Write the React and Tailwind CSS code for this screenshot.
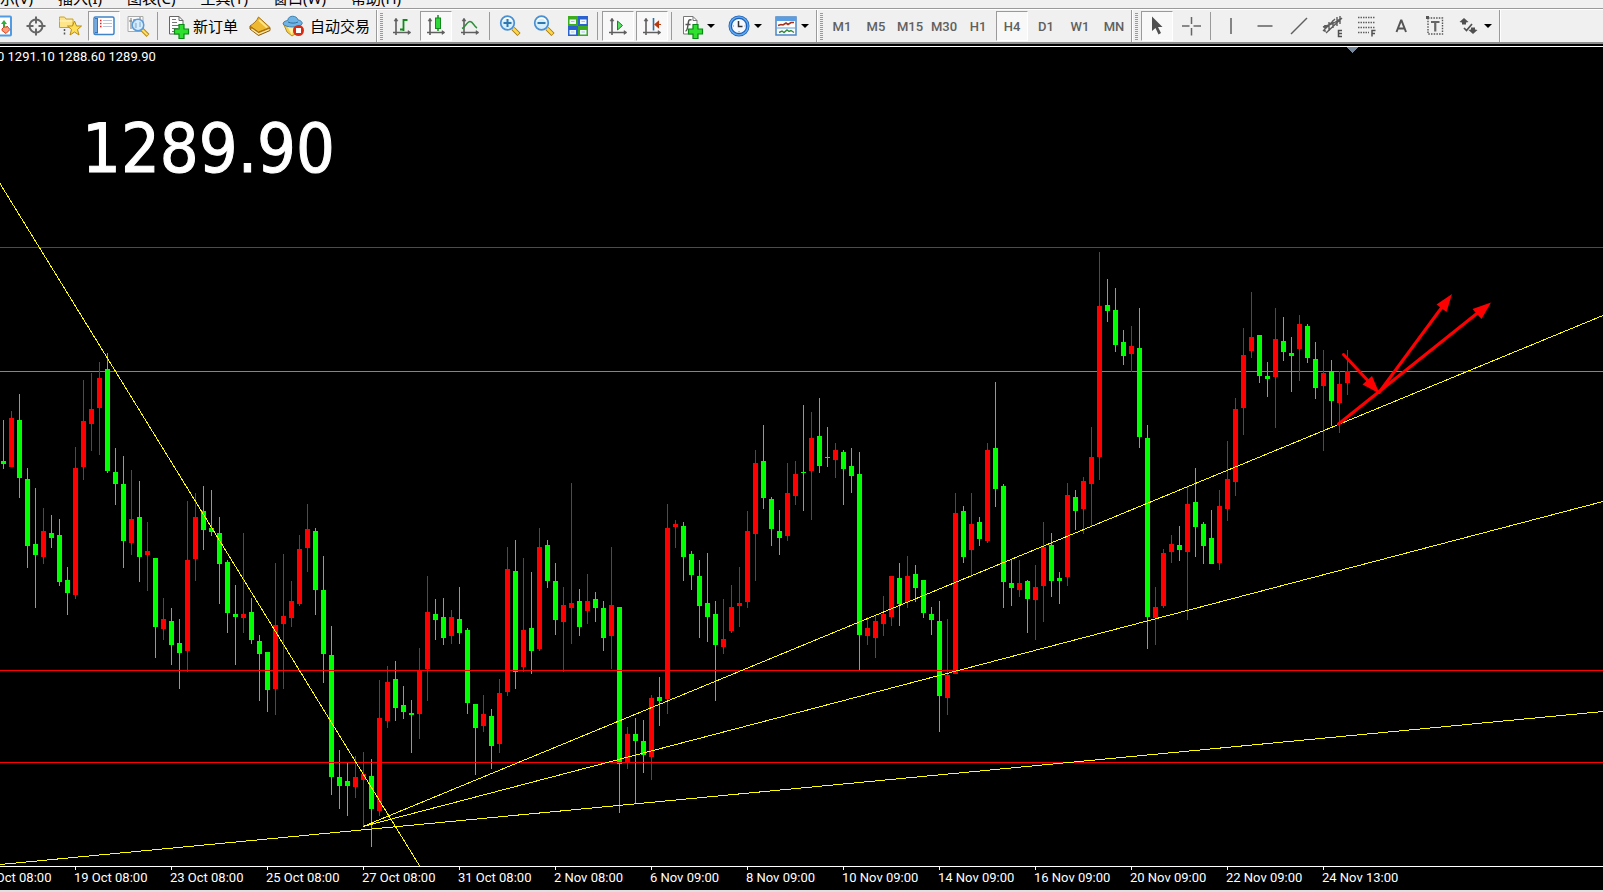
import { useState } from 'react';

// Chart coordinates are measured from the top of the window, the plot starts at this y
const PLOT_TOP = 47;
const BAR_STEP = 8;

// [direction, high, body top, body bottom, low]
const candles = [
  ['g', 420, 461, 464, 469], ['r', 411, 418, 467, 467], ['g', 394, 420, 478, 498], ['g', 468, 479, 546, 568],
  ['g', 488, 544, 555, 608], ['r', 508, 531, 557, 564], ['g', 515, 533, 538, 548], ['g', 519, 535, 582, 586],
  ['g', 567, 580, 593, 615], ['r', 447, 468, 595, 599], ['r', 380, 421, 467, 480], ['r', 373, 409, 424, 451],
  ['r', 362, 378, 408, 455], ['g', 353, 369, 471, 473], ['g', 448, 472, 484, 505], ['g', 456, 484, 541, 568],
  ['r', 470, 519, 543, 555], ['g', 481, 517, 557, 582], ['r', 522, 551, 555, 591], ['g', 558, 558, 627, 658],
  ['r', 598, 619, 629, 640], ['g', 608, 621, 645, 665], ['g', 619, 643, 653, 689], ['r', 501, 560, 651, 672],
  ['r', 493, 517, 559, 581], ['g', 486, 511, 530, 550], ['g', 490, 528, 532, 536], ['g', 517, 533, 564, 604],
  ['g', 560, 562, 613, 633], ['g', 585, 614, 617, 665], ['r', 533, 614, 618, 633], ['g', 598, 612, 640, 644],
  ['g', 635, 641, 654, 701], ['g', 652, 652, 690, 712], ['r', 563, 625, 689, 715], ['r', 554, 616, 624, 689],
  ['r', 581, 601, 618, 627], ['r', 535, 549, 604, 606], ['r', 504, 529, 548, 572], ['g', 528, 531, 590, 615],
  ['g', 556, 590, 654, 683], ['g', 626, 655, 777, 795], ['g', 750, 777, 786, 809], ['g', 763, 781, 786, 816],
  ['r', 756, 777, 787, 798], ['r', 752, 774, 780, 826], ['g', 759, 776, 809, 847], ['r', 680, 718, 811, 816],
  ['r', 666, 682, 721, 728], ['g', 661, 679, 708, 721], ['g', 686, 705, 712, 719], ['g', 700, 713, 715, 753],
  ['r', 648, 670, 714, 739], ['r', 576, 612, 669, 701], ['g', 599, 614, 620, 640], ['g', 598, 617, 638, 645],
  ['r', 610, 617, 636, 644], ['g', 587, 619, 633, 644], ['g', 628, 630, 703, 714], ['g', 704, 704, 728, 775],
  ['r', 695, 714, 726, 732], ['g', 709, 716, 746, 769], ['r', 679, 693, 744, 753], ['r', 547, 569, 692, 696],
  ['g', 540, 571, 672, 689], ['r', 558, 630, 667, 672], ['g', 572, 628, 651, 674], ['r', 528, 547, 649, 651],
  ['g', 540, 545, 581, 588], ['g', 563, 581, 620, 635], ['r', 587, 605, 622, 672], ['r', 483, 603, 608, 644],
  ['g', 589, 601, 627, 636], ['r', 574, 601, 611, 624], ['g', 592, 599, 608, 622], ['g', 601, 608, 638, 651],
  ['r', 547, 605, 636, 669], ['g', 607, 607, 764, 813], ['r', 727, 734, 762, 769], ['g', 718, 734, 741, 803],
  ['g', 720, 741, 755, 773], ['r', 695, 698, 757, 780], ['g', 677, 697, 701, 726], ['r', 504, 528, 699, 714],
  ['r', 520, 524, 527, 548], ['g', 522, 526, 557, 581], ['g', 551, 554, 575, 590], ['g', 560, 576, 606, 638],
  ['g', 553, 603, 617, 642], ['g', 601, 614, 645, 701], ['r', 599, 639, 647, 654], ['r', 585, 607, 631, 633],
  ['r', 567, 603, 606, 627], ['r', 511, 531, 602, 608], ['r', 450, 463, 534, 581], ['g', 425, 461, 498, 509],
  ['g', 497, 499, 529, 546], ['g', 510, 531, 538, 555], ['r', 463, 493, 536, 541], ['r', 461, 474, 496, 505],
  ['g', 405, 472, 473, 511], ['r', 412, 438, 471, 520], ['g', 398, 436, 466, 473], ['g', 427, 457, 458, 467],
  ['r', 443, 450, 460, 478], ['g', 450, 452, 469, 505], ['g', 448, 466, 476, 493], ['g', 452, 474, 635, 670],
  ['r', 617, 628, 636, 645], ['r', 616, 621, 638, 658], ['r', 596, 614, 624, 636], ['r', 576, 576, 617, 626],
  ['g', 563, 578, 604, 626], ['r', 556, 576, 602, 608], ['g', 565, 574, 588, 602], ['g', 580, 580, 613, 618],
  ['g', 607, 614, 620, 635], ['g', 601, 621, 696, 732], ['r', 619, 675, 698, 715], ['r', 493, 513, 674, 674],
  ['g', 506, 511, 557, 563], ['r', 493, 524, 550, 577], ['g', 517, 522, 539, 546], ['r', 443, 450, 541, 543],
  ['g', 382, 448, 489, 507], ['g', 484, 486, 582, 608], ['g', 559, 583, 588, 606], ['r', 560, 583, 590, 597],
  ['g', 580, 581, 599, 633], ['r', 565, 587, 600, 640], ['r', 522, 547, 586, 622], ['g', 533, 545, 581, 597],
  ['g', 572, 578, 581, 604], ['r', 483, 495, 577, 586], ['g', 490, 497, 511, 530], ['r', 477, 481, 509, 534],
  ['r', 427, 457, 484, 527], ['r', 252, 306, 457, 480], ['g', 279, 305, 311, 322], ['g', 288, 310, 345, 352],
  ['g', 330, 342, 356, 365], ['r', 326, 346, 354, 372], ['g', 308, 348, 437, 448], ['g', 425, 438, 617, 649],
  ['r', 587, 607, 618, 645], ['r', 549, 553, 606, 608], ['r', 535, 544, 552, 563], ['g', 526, 545, 550, 561],
  ['r', 486, 504, 552, 620], ['g', 468, 502, 527, 557], ['g', 522, 524, 546, 564], ['g', 510, 538, 564, 564],
  ['r', 490, 506, 563, 570], ['r', 441, 479, 509, 521], ['r', 398, 409, 482, 496], ['r', 328, 355, 408, 435],
  ['r', 292, 337, 351, 358], ['g', 335, 335, 376, 383], ['g', 362, 376, 379, 397], ['r', 308, 339, 377, 428],
  ['g', 317, 341, 352, 361], ['g', 337, 353, 356, 392], ['r', 315, 324, 349, 381], ['g', 324, 326, 358, 363],
  ['g', 342, 359, 388, 399], ['r', 350, 373, 386, 451], ['g', 360, 371, 401, 426], ['r', 371, 384, 403, 433],
  ['r', 350, 371, 383, 395],
];

const levels = [247, 670, 762];

const trendLines = [
  [0, 183, 420, 866],
  [363, 826, 1603, 315],
  [363, 826, 1603, 501],
  [0, 864, 1603, 711],
];

const dates = [
  '17 Oct 08:00', '19 Oct 08:00', '23 Oct 08:00', '25 Oct 08:00', '27 Oct 08:00', '31 Oct 08:00', '2 Nov 08:00',
  '6 Nov 09:00', '8 Nov 09:00', '10 Nov 09:00', '14 Nov 09:00', '16 Nov 09:00', '20 Nov 09:00', '22 Nov 09:00',
  '24 Nov 13:00',
];

const menus = ['显示(V)', '插入(I)', '图表(C)', '工具(T)', '窗口(W)', '帮助(H)'];
const timeframes = ['M1', 'M5', 'M15', 'M30', 'H1', 'H4', 'D1', 'W1', 'MN'];

function Icon({ children }) {
  return (
    <svg width="22" height="22" viewBox="0 0 22 22" fill="none" className="shrink-0 overflow-visible" aria-hidden="true">
      {children}
    </svg>
  );
}

function Axes() {
  return (
    <g stroke="#5f5f5f" strokeWidth="1.6">
      <path d="M5 4v16M2 17.5h17" />
      <path d="M3 6l2-3 2 3zM17 15.500l3 2-3 2z" fill="#5f5f5f" strokeWidth="0.500" />
    </g>
  );
}

function Plus() {
  return (
    <path d="M12 9.500h5v4.500h4.500v5H17v4.500h-5V19H7.500v-5H12z" fill="#2fe02f" stroke="#078a12" strokeWidth="1.200" />
  );
}

function Lens({ plus }) {
  return (
    <Icon>
      <path d="M14 13.500l6 6" stroke="#a87a10" strokeWidth="4.500" />
      <path d="M14 13.500l5.500 5.500" stroke="#ffd84a" strokeWidth="2.500" />
      <circle cx="8.500" cy="8" r="6.800" fill="#d5efff" stroke="#4a8fd0" strokeWidth="1.700" />
      <path d="M4 6a5 5 0 0 1 9 0" stroke="#fff" strokeWidth="1.200" />
      <path d={plus ? 'M4.500 8h8M8.500 4v8' : 'M4.500 8h8'} stroke="#2f78ad" strokeWidth="2" />
    </Icon>
  );
}

function MarketIcon() {
  return (
    <Icon>
      <rect x="1.500" y="1.500" width="18.500" height="19" rx="1" fill="#fff" stroke="#4f9be6" strokeWidth="2" />
      <path d="M10 9l3-4 3 4h-2v3h-2V9z" fill="#2fae3e" />
      <path d="M11 14l2-2h3v-1l3 3.500-4 4-4-3z" fill="#ff9c7a" stroke="#d4431c" />
    </Icon>
  );
}

function TargetIcon() {
  return (
    <Icon>
      <circle cx="11" cy="11" r="6.500" stroke="#666" strokeWidth="2" />
      <path d="M11 1.500v7M11 13.500v7M1.500 11h7M13.500 11h7" stroke="#666" strokeWidth="2" />
    </Icon>
  );
}

function FavoritesIcon() {
  return (
    <Icon>
      <path d="M0.500 3.500V2h5l1.500 2h7v8.500H0.500z" fill="#ffe58a" stroke="#c9a32b" />
      <path d="M0.500 6h13" stroke="#fff6c8" />
      <path d="M5.500 14v7" stroke="#555" strokeDasharray="2 1.500" strokeWidth="1.500" />
      <path d="M15.500 6l2 5h5l-4 3.500 1.500 5.500-4.500-3-4.500 3 1.500-5.500-4-3.500h5z" fill="#ffdf55" stroke="#b98b14" />
    </Icon>
  );
}

function PanelIcon() {
  return (
    <Icon>
      <rect x="1" y="2" width="20" height="17.500" rx="1.500" fill="#fff" stroke="#3f84c8" strokeWidth="1.500" />
      <path d="M2 3h3v15.500H2z" fill="#3377c4" />
      <path d="M3 4v13" stroke="#b8dcff" />
      <path d="M7 5.500h1.500M7 8.500h1.500M7 11.500h1.500" stroke="#e02020" strokeWidth="1.500" />
      <path d="M10 5.500h9M10 8.500h9M10 11.500h9" stroke="#b9c4d8" />
    </Icon>
  );
}

function TesterIcon() {
  return (
    <Icon>
      <path d="M1 1.500h15v15H1z" fill="#fafafa" stroke="#aaa" />
      <path d="M4 3v11M8 4v10M2 6h3M6 5h3M13 2v5" stroke="#777" />
      <path d="M15 14.500l6 6" stroke="#b98914" strokeWidth="4" />
      <path d="M15 14.500l5.500 5.500" stroke="#ffe06a" strokeWidth="2" />
      <circle cx="11" cy="10" r="5.800" fill="#cfeaff" fillOpacity="0.850" stroke="#5c9bd6" strokeWidth="1.500" />
      <path d="M9 8v5M13 7v5" stroke="#7aa6c8" />
    </Icon>
  );
}

function NewOrderIcon() {
  return (
    <Icon>
      <path d="M2.500 1.500h9.500l4 4v13.500H2.500z" fill="#fff" stroke="#666" />
      <path d="M12 1.500v4h4" stroke="#666" />
      <path d="M5 4.500h4M5 7.500h5M5 10.500h8M5 13.500h6M5 16.500h3" stroke="#777" />
      <Plus />
    </Icon>
  );
}

function BookIcon() {
  return (
    <Icon>
      <path d="M1 11v3l8.500 6.500L21 15.500v-3L9.500 17z" fill="#c98a18" stroke="#8c5a0a" />
      <path d="M2.500 14l7 5 11-4.500" stroke="#ffeeb0" strokeWidth="1.200" />
      <path d="M9.500 2L21 12.500 9.500 17 1 11C4 9 8 6 9.500 2z" fill="#efb92f" stroke="#a8720f" />
      <path d="M10 5l8 7.500" stroke="#ffe587" strokeWidth="1.800" />
    </Icon>
  );
}

function AutoTradeIcon() {
  return (
    <Icon>
      <path d="M2 10h17l-3 7-6 4-5-4z" fill="#f6cf4b" stroke="#b68d20" />
      <path d="M5 11l5 9 2-9z" fill="#fff0a8" />
      <path d="M1 9c0-3 4-3 5-4 0-5 9-5 10 0 2 0 5 2 4 4-3 4-16 4-19 0z" fill="#6fb4e4" stroke="#3a7fb0" />
      <path d="M6 7c3 1.500 7 1.500 10 0" stroke="#2f6f9f" />
      <circle cx="16.500" cy="15.500" r="5.500" fill="#de2a12" />
      <rect x="14" y="13" width="5" height="5" fill="#fff" />
    </Icon>
  );
}

function BarsIcon() {
  return (
    <Icon>
      <Axes />
      <path d="M12.500 4v12M12.500 5h4M9 14.500h3.500" stroke="#128a1c" strokeWidth="1.800" />
    </Icon>
  );
}

function CandlesIcon() {
  return (
    <Icon>
      <Axes />
      <path d="M13 0v16" stroke="#128a1c" strokeWidth="1.500" />
      <rect x="10.500" y="3" width="5" height="10.500" fill="#2fd83a" stroke="#128a1c" />
    </Icon>
  );
}

function LineIcon() {
  return (
    <Icon>
      <Axes />
      <path d="M3 13.500c3-1 5-7 8-7s4 5 7 6.500" stroke="#2d8f3a" strokeWidth="1.600" />
    </Icon>
  );
}

function TileIcon() {
  return (
    <Icon>
      <path d="M1 1h10v10H1z" fill="#3cab1e" />
      <path d="M11 1h10v10H11z" fill="#2b62cf" />
      <path d="M1 11h10v10H1z" fill="#2b62cf" />
      <path d="M11 11h10v10H11z" fill="#3cab1e" />
      <path d="M2.500 4.500H9V9H2.500zM13 4.500h6.500V9H13zM2.500 15H9v4.500H2.500zM13 15h6.500v4.500H13z" fill="#f2f8ff" />
      <path d="M4 6.500h3.500M14.500 6.500H18M4 17h3.500M14.500 17H18" stroke="#a8cbe0" />
    </Icon>
  );
}

function AutoScrollIcon() {
  return (
    <Icon>
      <Axes />
      <path d="M10.500 6v9l5-4.500z" fill="#59dd62" stroke="#118a1b" />
    </Icon>
  );
}

function ShiftIcon() {
  return (
    <Icon>
      <Axes />
      <path d="M12.500 3v12.500" stroke="#2a6fa8" strokeWidth="1.600" />
      <path d="M14 9.500h6M17.500 6.500l-3.500 3 3.500 3z" stroke="#b8380c" strokeWidth="1.200" fill="#b8380c" />
    </Icon>
  );
}

function IndicatorIcon() {
  return (
    <Icon>
      <path d="M2.500 1.500h9.500l4 4v13.500H2.500z" fill="#fff" stroke="#777" />
      <path d="M12 1.500v4h4" stroke="#777" />
      <path d="M10.500 5c-3-1-3 1-3.500 5s-1.500 6-2.500 6M4.500 9.500h5" stroke="#555" strokeWidth="1.500" />
      <Plus />
    </Icon>
  );
}

function ClockIcon() {
  return (
    <Icon>
      <circle cx="11" cy="11" r="10.500" fill="#1c5fb5" />
      <circle cx="11" cy="11" r="9" stroke="#5fa8ee" strokeWidth="1.500" />
      <circle cx="11" cy="11" r="7" fill="#f4f9ff" />
      <path d="M10.500 6v5.500h4" stroke="#333" strokeWidth="1.500" />
      <path d="M11 16v1.500M5 11h1M16.500 11h1" stroke="#7a8ba0" />
    </Icon>
  );
}

function TemplateIcon() {
  return (
    <Icon>
      <rect x="1" y="2" width="20" height="18" fill="#fff" stroke="#4a86c6" strokeWidth="1.500" />
      <path d="M1 2h20v4H1z" fill="#5a9de0" />
      <path d="M2 13h18" stroke="#5a9de0" />
      <path d="M3 10.500l3-1 2 .5 3-2 2 1.500 3-2h3" stroke="#a8321c" strokeWidth="1.600" />
      <path d="M4 17.500l3-1.500 2 1.500 3-2.500 2 1.500 2-1 3 2" stroke="#2f8a3a" strokeWidth="1.400" />
    </Icon>
  );
}

function CursorIcon() {
  return (
    <Icon>
      <path d="M6 1.500v14.500l3.500-3 3 6.500 2.500-1.500-3-6h4.500z" fill="#4f4f4f" />
    </Icon>
  );
}

function CrosshairIcon() {
  return (
    <Icon>
      <path d="M11.500 2v7M11.500 13v7.500M2 11h7.500M13.500 11H21" stroke="#666" strokeWidth="1.500" />
    </Icon>
  );
}

function VerticalIcon() {
  return (
    <Icon>
      <path d="M11 3v16" stroke="#606060" strokeWidth="1.500" />
    </Icon>
  );
}

function HorizontalIcon() {
  return (
    <Icon>
      <path d="M3.500 11h15" stroke="#606060" strokeWidth="1.500" />
    </Icon>
  );
}

function TrendIcon() {
  return (
    <Icon>
      <path d="M3 19L19 3" stroke="#606060" strokeWidth="1.500" />
    </Icon>
  );
}

function ChannelIcon() {
  return (
    <Icon>
      <path d="M1 16L13 4M4 18L20 3M3 10v7M7 7v9M11 5v8M15 2v9M18 1v8M1 12l6-2 5-2 6-4" stroke="#5c5c5c" strokeWidth="1.400" />
      <path d="M20 15.500h-3.500v6H20M16.500 18.500H20" stroke="#505050" strokeWidth="1.500" />
    </Icon>
  );
}

function FiboIcon() {
  return (
    <Icon>
      <path d="M2 2.500h17M2 7.500h17M2 12.500h17M2 17.500h11" stroke="#606060" strokeWidth="1.500" strokeDasharray="1.500 1" />
      <path d="M19.500 15.500H16v6M16 18.500h3" stroke="#505050" strokeWidth="1.500" />
    </Icon>
  );
}

function TextIcon() {
  return (
    <Icon>
      <path d="M6.500 17L11 5.500h.5L16 17M8 13.500h6.500" stroke="#555" strokeWidth="2" />
    </Icon>
  );
}

function LabelIcon() {
  return (
    <Icon>
      <rect x="4" y="3" width="14.500" height="16" stroke="#555" strokeDasharray="1.500 1.200" strokeWidth="1.400" />
      <path d="M2 1h3v3H2z" fill="#555" />
      <path d="M7 7h8.500M11.250 7v9.500" stroke="#666" strokeWidth="2.200" />
    </Icon>
  );
}

function ShapesIcon() {
  return (
    <Icon>
      <path d="M6 3l4.500 4L8 7.500v2H4v-2L1.500 7z" fill="#505050" />
      <path d="M15 19l-4.500-4 2.500-.5v-2h4v2l2.500.5z" fill="#505050" />
      <path d="M6 13l2.500 2.500L14 9" stroke="#505050" strokeWidth="1.700" />
    </Icon>
  );
}

function ToolButton({ label, active, onClick, children }) {
  return (
    <button
      type="button"
      aria-label={label}
      aria-pressed={active}
      onClick={onClick}
      className={
        active
          ? 'mx-px flex h-[30px] w-8 shrink-0 items-center justify-center border border-t-[#9a9a9a] border-r-white border-b-white border-l-[#9a9a9a] bg-[#f8f8f8]'
          : 'mx-px flex h-[30px] w-8 shrink-0 items-center justify-center border border-transparent'
      }
    >
      {children}
    </button>
  );
}

function DropButton({ label, children }) {
  return (
    <button type="button" aria-label={label} className="flex h-[30px] w-[47px] shrink-0 items-center gap-1 pl-[6px]">
      {children}
      <svg width="8" height="4" viewBox="0 0 8 4" aria-hidden="true">
        <path d="M0 0h8L4 4z" fill="#000" />
      </svg>
    </button>
  );
}

function Separator() {
  return <div className="ml-[2px] mr-[3px] h-7 w-px shrink-0 bg-[#9a9a9a]" />;
}

function Grip() {
  return (
    <div className="mx-[2px] h-[27px] w-[3px] shrink-0 bg-[repeating-linear-gradient(#9a9a9a_0_1px,#f0f0f0_1px_2px)]" />
  );
}

function ToolGroup({ children }) {
  return (
    <div className="flex h-8 shrink-0 items-center border-r border-r-white">
      {children}
      <div className="h-full w-px bg-[#9a9a9a]" />
    </div>
  );
}

function Toolbar() {
  const [timeframe, setTimeframe] = useState('H4');

  return (
    <div className="flex h-8 overflow-hidden bg-[#f0f0f0]">
      <div className="-ml-[15px] flex shrink-0">
        <ToolGroup>
          <ToolButton label="Market Watch"><MarketIcon /></ToolButton>
          <ToolButton label="Data Window"><TargetIcon /></ToolButton>
          <ToolButton label="Navigator"><FavoritesIcon /></ToolButton>
          <ToolButton label="Terminal" active><PanelIcon /></ToolButton>
          <ToolButton label="Strategy Tester"><TesterIcon /></ToolButton>
          <Separator />
          <button type="button" className="flex h-[30px] w-[82px] shrink-0 items-center gap-1 pl-[6px] text-[15px] leading-5 whitespace-nowrap">
            <NewOrderIcon />
            新订单
          </button>
          <ToolButton label="MetaEditor"><BookIcon /></ToolButton>
          <button type="button" className="flex h-[30px] w-[99px] shrink-0 items-center gap-[6px] pl-[5px] text-[15px] leading-5 whitespace-nowrap">
            <AutoTradeIcon />
            自动交易
          </button>
        </ToolGroup>
      </div>
      <ToolGroup>
        <Grip />
        <ToolButton label="Bar Chart"><BarsIcon /></ToolButton>
        <ToolButton label="Candlesticks" active><CandlesIcon /></ToolButton>
        <ToolButton label="Line Chart"><LineIcon /></ToolButton>
        <Separator />
        <ToolButton label="Zoom In"><Lens plus /></ToolButton>
        <ToolButton label="Zoom Out"><Lens /></ToolButton>
        <ToolButton label="Tile Windows"><TileIcon /></ToolButton>
        <Separator />
        <ToolButton label="Auto Scroll" active><AutoScrollIcon /></ToolButton>
        <ToolButton label="Chart Shift" active><ShiftIcon /></ToolButton>
        <Separator />
        <DropButton label="Indicators"><IndicatorIcon /></DropButton>
        <DropButton label="Periods"><ClockIcon /></DropButton>
        <DropButton label="Templates"><TemplateIcon /></DropButton>
      </ToolGroup>
      <ToolGroup>
        <Grip />
        {timeframes.map((name) => (
          <ToolButton key={name} label={name} active={name === timeframe} onClick={() => setTimeframe(name)}>
            <span className="pt-px font-['Roboto','Noto_Sans',sans-serif] text-[13px] leading-4 font-medium text-[#606060]">{name}</span>
          </ToolButton>
        ))}
      </ToolGroup>
      <ToolGroup>
        <Grip />
        <ToolButton label="Cursor" active><CursorIcon /></ToolButton>
        <ToolButton label="Crosshair"><CrosshairIcon /></ToolButton>
        <Separator />
        <ToolButton label="Vertical Line"><VerticalIcon /></ToolButton>
        <ToolButton label="Horizontal Line"><HorizontalIcon /></ToolButton>
        <ToolButton label="Trendline"><TrendIcon /></ToolButton>
        <ToolButton label="Equidistant Channel"><ChannelIcon /></ToolButton>
        <ToolButton label="Fibonacci Retracement"><FiboIcon /></ToolButton>
        <ToolButton label="Text"><TextIcon /></ToolButton>
        <ToolButton label="Text Label"><LabelIcon /></ToolButton>
        <DropButton label="Arrows"><ShapesIcon /></DropButton>
      </ToolGroup>
    </div>
  );
}

function Candle({ candle, x }) {
  const [direction, high, top, bottom, low] = candle;
  return (
    <g fill={direction === 'g' ? '#00ff00' : '#ff0000'}>
      <rect x={x + 2} y={high} width="1" height={low - high} />
      <rect x={x} y={top} width="5" height={bottom - top} />
    </g>
  );
}

function Chart() {
  return (
    <div className="relative flex min-h-[819px] flex-1 overflow-hidden">
      <svg width="100%" className="absolute inset-0 h-full w-full" aria-label="XAUUSD H4">
        <g transform={`translate(0 ${-PLOT_TOP})`}>
          <g shapeRendering="crispEdges">
            <rect x="0" y="371" width="100%" height="1" fill="#778899" />
            {candles.map((candle, i) => (
              <Candle key={i} candle={candle} x={1 + i * BAR_STEP} />
            ))}
            {levels.map((y) => (
              <rect key={y} x="0" y={y} width="100%" height="1" fill="#ff0000" />
            ))}
            {trendLines.map(([x1, y1, x2, y2]) => (
              <line key={`${x1}-${y2}`} x1={x1} y1={y1 + 0.5} x2={x2} y2={y2 + 0.5} stroke="#ffff00" />
            ))}
            <path d="M1346 47h13l-6.500 6z" fill="#778899" />
          </g>
          {/* forecast arrows */}
          <g stroke="#ff0000" strokeWidth="3" strokeLinecap="round">
            <path d="M1343.500 354.500L1372 385M1338.500 424L1480 311M1379 392.500L1445 303" fill="none" />
          </g>
          <g fill="#ff0000">
            <path d="M1379.500 393.500l-17-9 9.500-8.500z" />
            <path d="M1491 302.500l-18.500 6.500 9 10z" />
            <path d="M1452 294l-15.500 10.500 10 7.500z" />
          </g>
        </g>
      </svg>
      <div className="relative text-white">
        <p className="-ml-[3px] pt-[2px] font-['Roboto','Noto_Sans',sans-serif] text-[13px] leading-4">0 1291.10 1288.60 1289.90</p>
        <p className="pt-11 pl-[82px] font-['Comic_Sans_MS','DejaVu_Sans_Condensed',sans-serif] text-[68px] leading-[80px] [-webkit-text-stroke:1px_white]">1289.90</p>
      </div>
    </div>
  );
}

function TimeAxis() {
  return (
    <div className="flex h-6 overflow-hidden border-t border-white font-['Roboto','Noto_Sans',sans-serif] text-[13px] text-white">
      <div className="-ml-[22px] flex">
        {dates.map((date) => (
          <div key={date} className="w-24 shrink-0 whitespace-nowrap">
            <div className="ml-px h-[3px] w-px bg-white" />
            <span className="block leading-4">{date}</span>
          </div>
        ))}
      </div>
    </div>
  );
}

function App() {
  return (
    <div className="flex min-h-screen flex-col overflow-hidden bg-black">
      <header className="border-b-2 border-[#8c8c8c] bg-[#f0f0f0] font-['Noto_Sans','Noto_Sans_CJK_SC',sans-serif] text-black">
        <nav className="flex h-2 items-end overflow-hidden bg-[#f0f0f0]">
          <div className="-ml-[15px] flex gap-[25px] text-[15px] leading-5">
            {menus.map((menu) => (
              <a key={menu} href="#" className="whitespace-nowrap">{menu}</a>
            ))}
          </div>
        </nav>
        <div className="border-t border-t-[#9a9a9a]">
          <div className="border-t border-t-white">
            <Toolbar />
          </div>
        </div>
      </header>
      <main className="mt-[2px] flex flex-1 flex-col border-t border-white">
        <Chart />
        <TimeAxis />
      </main>
      <footer className="h-[2px] bg-[#e0e0e0]" />
    </div>
  );
}

export default App;
